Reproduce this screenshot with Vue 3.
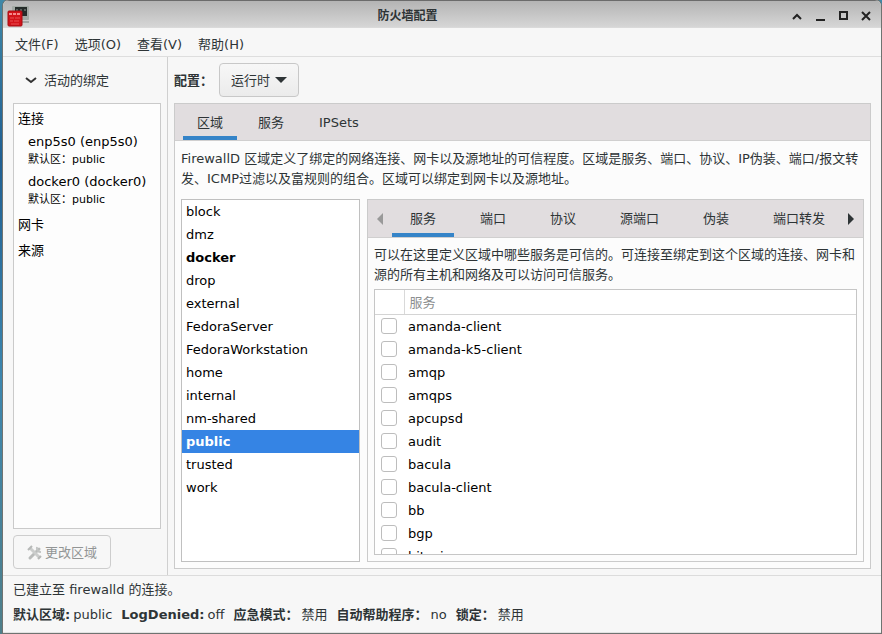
<script setup>
import { ref } from 'vue'

const menus = ['文件(F)', '选项(O)', '查看(V)', '帮助(H)']
const mode = ref('运行时')
const mainTabs = ['区域', '服务', 'IPSets']
const mainTab = ref('区域')
const zoneTabs = ['服务', '端口', '协议', '源端口', '伪装', '端口转发']
const zoneTab = ref('服务')
const zones = [
  'block', 'dmz', 'docker', 'drop', 'external', 'FedoraServer', 'FedoraWorkstation',
  'home', 'internal', 'nm-shared', 'public', 'trusted', 'work'
]
const activeZones = ['docker', 'public']
const zone = ref('public')
const services = [
  'amanda-client', 'amanda-k5-client', 'amqp', 'amqps', 'apcupsd', 'audit',
  'bacula', 'bacula-client', 'bb', 'bgp', 'bitcoin'
]
const enabled = ref([])
const connections = [
  { name: 'enp5s0 (enp5s0)', zone: '默认区：public' },
  { name: 'docker0 (docker0)', zone: '默认区：public' }
]
const status = [
  ['默认区域:', 'public'],
  ['LogDenied:', 'off'],
  ['应急模式：', '禁用'],
  ['自动帮助程序：', 'no'],
  ['锁定：', '禁用']
]
</script>

<template>
  <div class="desktop">
    <div class="window">
      <header class="titlebar">
        <svg class="app-icon" viewBox="0 0 24 24" aria-hidden="true">
          <rect x="6" y="2" width="17" height="14" rx="1" fill="#a3aaa5" />
          <rect x="9" y="3" width="12" height="9" fill="#252b29" />
          <path d="M10 5h2v2h-2zM14 5h2v2h-2zM18 5h2v2h-2z" fill="#59625e" />
          <path d="M15 17h8v2h-8z" fill="#a2a5a3" />
          <rect x="2" y="7" width="14" height="15" rx="1" fill="#d3131a" stroke="#a50c12" />
          <path d="M3 10h12" stroke="#f5898b" stroke-width="2" stroke-dasharray="3 1" />
          <path d="M4 14h4M9 14h5M4 17h3M8 17h5M5 20h8" stroke="#ea5053" />
        </svg>
        <h1>防火墙配置</h1>
        <div class="controls">
          <button aria-label="卷起"><svg viewBox="0 0 12 12"><path d="M2 9l4-4 4 4" /></svg></button>
          <button aria-label="最小化"><svg viewBox="0 0 12 12"><path d="M2 10h9" /></svg></button>
          <button aria-label="最大化"><svg viewBox="0 0 12 12"><path d="M3 2h7v7H3z" /></svg></button>
          <button aria-label="关闭"><svg viewBox="0 0 12 12"><path d="M2 2l8 8M10 2l-8 8" /></svg></button>
        </div>
      </header>

      <nav class="menubar">
        <button v-for="m in menus" :key="m">{{ m }}</button>
      </nav>

      <div class="body">
        <aside class="sidebar">
          <button class="expander">
            <svg viewBox="0 0 12 12" aria-hidden="true"><path d="M1 3l5 4 5-4" /></svg>
            活动的绑定
          </button>
          <div class="tree">
            <div class="group">连接</div>
            <div v-for="c in connections" :key="c.name" class="binding">
              <div>{{ c.name }}</div>
              <small>{{ c.zone }}</small>
            </div>
            <div class="group">网卡</div>
            <div class="group">来源</div>
          </div>
          <button class="change" disabled>
            <svg viewBox="0 0 16 16" aria-hidden="true">
              <path d="M3 13L12 4" stroke="#b9bbba" stroke-width="3" stroke-linecap="round" />
              <path d="M10 2a4 4 0 0 0 4 5" stroke="#c3c5c4" stroke-width="2" />
              <path d="M3 3l10 10" stroke="#cbcdcc" stroke-width="3" />
              <path d="M1 5l4-4M11 14l3-3" stroke="#b6b8b7" stroke-width="2" />
            </svg>
            更改区域
          </button>
        </aside>

        <main class="main">
          <div class="config">
            <label for="mode">配置：</label>
            <span class="combo">
              <select id="mode" v-model="mode">
                <option>运行时</option>
                <option>永久</option>
              </select>
              <svg viewBox="0 0 12 6" aria-hidden="true"><path d="M0 0h12L6 6z" /></svg>
            </span>
          </div>

          <section class="notebook">
            <div class="tabs" role="tablist">
              <button
                v-for="t in mainTabs" :key="t" role="tab"
                :aria-selected="mainTab === t" :class="{ on: mainTab === t }" @click="mainTab = t"
              >{{ t }}</button>
            </div>
            <p class="intro">FirewallD 区域定义了绑定的网络连接、网卡以及源地址的可信程度。区域是服务、端口、协议、IP伪装、端口/报文转发、ICMP过滤以及富规则的组合。区域可以绑定到网卡以及源地址。</p>
            <div class="split">
              <ul class="zones">
                <li v-for="z in zones" :key="z">
                  <button
                    :class="{ active: activeZones.includes(z), selected: zone === z }"
                    @click="zone = z"
                  >{{ z }}</button>
                </li>
              </ul>
              <section class="detail">
                <div class="tabs inner">
                  <button class="arrow dim" aria-label="向左"><svg viewBox="0 0 8 12"><path d="M7 0v12L1 6z" /></svg></button>
                  <div class="strip" role="tablist">
                    <button
                      v-for="t in zoneTabs" :key="t" role="tab"
                      :aria-selected="zoneTab === t" :class="{ on: zoneTab === t }" @click="zoneTab = t"
                    >{{ t }}</button>
                  </div>
                  <button class="arrow" aria-label="向右"><svg viewBox="0 0 8 12"><path d="M1 0v12l6-6z" /></svg></button>
                </div>
                <p class="hint">可以在这里定义区域中哪些服务是可信的。可连接至绑定到这个区域的连接、网卡和源的所有主机和网络及可以访问可信服务。</p>
                <div class="table-frame">
                  <table>
                    <thead>
                      <tr><th class="tick"></th><th>服务</th></tr>
                    </thead>
                    <tbody>
                      <tr v-for="s in services" :key="s">
                        <td class="tick"><input :id="'svc-' + s" v-model="enabled" type="checkbox" :value="s"></td>
                        <td><label :for="'svc-' + s">{{ s }}</label></td>
                      </tr>
                    </tbody>
                  </table>
                </div>
              </section>
            </div>
          </section>
        </main>
      </div>

      <footer class="status">
        <div>已建立至 firewalld 的连接。</div>
        <dl>
          <div v-for="[k, v] in status" :key="k"><dt>{{ k }}</dt><dd>{{ v }}</dd></div>
        </dl>
      </footer>
    </div>
  </div>
</template>

<style>
body { margin: 0; }
</style>

<style scoped>
.desktop, .desktop * { box-sizing: border-box; }
.desktop {
  height: 100vh;
  padding: 0 1px 1px 3px;
  background: linear-gradient(#3f88a8, #1f5f92 25%, #3c86ae 60%, #4f7f8a);
  font: 13px/20px "DejaVu Sans", "Noto Sans CJK SC", sans-serif;
  color: #2e3436;
}
button, select { font: inherit; color: inherit; background: none; border: 0; padding: 0; margin: 0; white-space: nowrap; }
svg { display: block; }
p, h1, ul, dl, dd { margin: 0; padding: 0; }

.window {
  height: 100%;
  display: flex;
  flex-direction: column;
  background: #f7f7f7;
  border-radius: 6px 6px 0 0;
  box-shadow: 0 0 0 1px #6f7371;
  overflow: hidden;
}

.titlebar {
  height: 28px;
  display: flex;
  align-items: center;
  padding: 3px 4px 0 3px;
  background: linear-gradient(#b4b4b4, #d6d6d6);
  border-top: 1px solid #6b6b6b;
  border-bottom: 1px solid #dadada;
}
.app-icon { width: 24px; height: 24px; }
.titlebar h1 { flex: 1; font-size: 12px; font-weight: bold; text-align: center; }
.controls { display: flex; }
.controls button { width: 23px; height: 20px; display: grid; place-items: center; }
.controls svg { width: 12px; height: 12px; fill: none; stroke: #222; stroke-width: 2; }

.menubar { display: flex; gap: 16px; padding: 7px 12px 1px; border-bottom: 1px solid #dedede; height: 29px; }

.body { flex: 1; min-height: 0; display: flex; border-bottom: 1px solid #dcdcdc; }
.sidebar { width: 165px; display: flex; flex-direction: column; gap: 6px; padding: 6px 6px 6px 10px; border-right: 1px solid #d0d0d0; }
.expander { display: flex; align-items: center; gap: 7px; height: 34px; padding: 2px 0 0 12px; }
.expander svg { width: 12px; height: 12px; fill: none; stroke: #333; stroke-width: 2; }
.tree { flex: 1; background: #fdfdfd; border: 1px solid #cacaca; padding: 2px 4px; color: #000; }
.group { line-height: 26px; }
.binding { height: 40px; padding: 0 10px; line-height: 20px; white-space: nowrap; }
.binding small { display: block; font-size: 11px; line-height: 16px; }
.change {
  align-self: flex-start; display: flex; align-items: center; gap: 2px;
  height: 34px; padding: 2px 13px 0; border: 1px solid #cdcdcd; border-radius: 4px; color: #929595;
}
.change svg { width: 16px; height: 16px; fill: none; }

.main { flex: 1; min-width: 0; display: flex; flex-direction: column; gap: 6px; padding: 6px 10px 6px 6px; }
.config { display: flex; align-items: center; gap: 6px; height: 34px; }
.config label { font-weight: bold; padding-top: 2px; }
.combo { display: grid; align-items: center; }
.combo select {
  grid-area: 1 / 1; appearance: none; height: 34px; padding: 2px 27px 0 11px;
  border: 1px solid #c8c8c8; border-radius: 4px; background: linear-gradient(#f7f7f7, #ebebeb);
}
.combo svg { grid-area: 1 / 1; justify-self: end; margin-right: 12px; width: 12px; height: 6px; fill: #2e3436; pointer-events: none; }

.notebook { flex: 1; min-height: 0; display: flex; flex-direction: column; background: #fcfcfc; border: 1px solid #cbcbcb; }
.tabs { display: flex; gap: 7px; height: 37px; padding-left: 8px; background: #e1dddf; border-bottom: 1px solid #d0cfcf; }
.tabs button { padding: 5px 14px 0; border-bottom: 4px solid transparent; }
.tabs .on { border-color: #3584c8; }
.intro { padding: 8px 6px 10px; }

.split { flex: 1; min-height: 0; display: flex; gap: 7px; padding: 0 6px 6px; }
.zones { width: 179px; list-style: none; background: #fff; border: 1px solid #c0c0c0; color: #000; overflow: hidden; }
.zones button { display: block; width: 100%; height: 23px; padding: 0 4px; text-align: left; }
.zones .active { font-weight: bold; }
.zones .selected { background: #3584e4; color: #fff; }

.detail { flex: 1; min-width: 0; display: flex; flex-direction: column; border: 1px solid #cbcbcb; }
.inner { padding: 0; gap: 0; height: 38px; }
.strip { flex: 1; min-width: 0; display: flex; gap: 8px; overflow: hidden; }
.strip button { padding: 5px 18px 0; }
.tabs .arrow { width: 24px; padding: 0 8px; display: grid; place-items: center; border: 0; }
.arrow svg { width: 8px; height: 12px; fill: #2e3436; }
.arrow.dim svg { fill: #999; }
.hint { padding: 7px 6px 4px; }
.table-frame { flex: 1; min-height: 0; margin: 0 6px 6px; border: 1px solid #c6c6c6; background: #fff; overflow: hidden; }
table { width: 100%; border-collapse: collapse; color: #000; }
th { height: 24px; padding: 2px 5px 0; line-height: 20px; border-bottom: 1px solid #d4d4d4; text-align: left; font-weight: normal; color: #8b8e8f; }
th.tick { width: 29px; border-right: 1px solid #d9d9d9; }
td { height: 23px; padding: 0 4px; }
td label { display: block; line-height: 23px; }
td.tick { padding: 0 6px; }
td input { appearance: none; display: block; width: 16px; height: 16px; margin: 0; border: 1px solid #bdbdbd; border-radius: 3px; background: #fff; }
td input:checked { background: #3584e4; }

.status { padding: 4px 10px 7px; border-bottom: 1px solid #e2e2e2; }
.status dl { display: flex; gap: 9px; margin-top: 5px; white-space: nowrap; }
.status dl div { display: flex; gap: 3px; }
.status dt { font-weight: bold; }
</style>
